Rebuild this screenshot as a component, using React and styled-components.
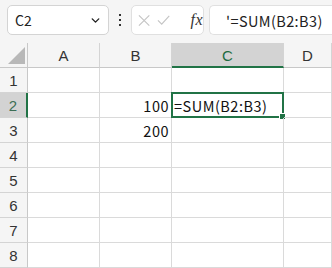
import React from "react";
import styled, { createGlobalStyle } from "styled-components";
import { ChevronDown } from "lucide-react";

const GlobalStyle = createGlobalStyle`
  html, body {
    margin: 0;
    padding: 0;
    background: #ffffff;
    overflow: hidden;
  }
  * { box-sizing: border-box; }
`;

const SHEET_FONT = `"Noto Sans CJK JP", "Noto Sans", "Liberation Sans", sans-serif`;

const Page = styled.div`
  width: 332px;
  height: 268px;
  display: flex;
  flex-direction: column;
  background: #f5f5f5;
  font-family: ${SHEET_FONT};
`;

const Toolbar = styled.div`
  height: 43px;
  display: flex;
  align-items: flex-start;
  padding: 5px 0 0 7px;
`;

const NameBox = styled.div`
  width: 102px;
  height: 30px;
  background: #fff;
  border: 1px solid #d4d4d4;
  border-radius: 5px;
  display: flex;
  align-items: center;
  justify-content: space-between;
  padding: 0 6px 0 7px;
  font-size: 14px;
  color: #222;
`;

const Dots = styled.div`
  width: 22px;
  height: 30px;
  display: flex;
  flex-direction: column;
  align-items: center;
  justify-content: center;
  gap: 3px;
  span {
    width: 2px;
    height: 2px;
    background: #333;
  }
`;

const ActionBox = styled.div`
  width: 73px;
  height: 30px;
  background: #fff;
  border: 1px solid #e0e0e0;
  border-radius: 5px;
  display: flex;
  align-items: center;
  padding: 0 0 0 6px;
  gap: 7px;
`;

const Fx = styled.span`
  font-family: "Liberation Serif", serif;
  font-style: italic;
  font-size: 16px;
  color: #333;
  margin-left: 13px;
  letter-spacing: 0.5px;
`;

const FormulaInput = styled.div`
  flex: 1;
  height: 30px;
  margin-left: 5px;
  background: #fff;
  border: 1px solid #e0e0e0;
  border-right: none;
  border-radius: 5px 0 0 5px;
  display: flex;
  align-items: center;
  padding-left: 16px;
  font-size: 14.5px;
  letter-spacing: 0.4px;
  color: #222;
`;

const Sheet = styled.div`
  flex: 1;
  display: grid;
  grid-template-columns: 28px 72px 72px 112px 1fr;
  grid-template-rows: 25px repeat(8, 25px);
  background: #fff;
`;

const Corner = styled.div`
  background: #f5f5f5;
  border-right: 1px solid #c8c8c8;
  border-bottom: 1px solid #c8c8c8;
  display: flex;
  align-items: flex-end;
  justify-content: flex-end;
  padding: 0 2px 3px 0;
`;

const ColHead = styled.div`
  background: ${(p) => (p.$active ? "#d3d3d3" : "#f5f5f5")};
  border-right: 1px solid #d4d4d4;
  border-bottom: ${(p) => (p.$active ? "2px solid #217346" : "1px solid #c8c8c8")};
  color: ${(p) => (p.$active ? "#1d6b40" : "#333")};
  font-family: "Liberation Sans", sans-serif;
  font-size: 15px;
  display: flex;
  align-items: center;
  justify-content: center;
  padding-top: ${(p) => (p.$active ? "1px" : "0")};
`;

const RowHead = styled.div`
  background: ${(p) => (p.$active ? "#d3d3d3" : "#f5f5f5")};
  border-right: ${(p) => (p.$active ? "2px solid #217346" : "1px solid #c8c8c8")};
  border-bottom: 1px solid #d4d4d4;
  color: ${(p) => (p.$active ? "#3d6e55" : "#333")};
  font-family: "Liberation Sans", sans-serif;
  font-size: 15px;
  display: flex;
  align-items: center;
  justify-content: center;
`;

const Cell = styled.div`
  position: relative;
  border-right: 1px solid #dadada;
  border-bottom: 1px solid #dadada;
  font-size: 14.5px;
  letter-spacing: 0.5px;
  color: #111;
  display: flex;
  align-items: center;
  justify-content: ${(p) => (p.$num ? "flex-end" : "flex-start")};
  padding: 0 2px;
  white-space: nowrap;
`;

const Selection = styled.div`
  position: absolute;
  left: -1px;
  top: -1px;
  right: -1px;
  bottom: -1px;
  border: 2px solid #217346;
  pointer-events: none;
  &::after {
    content: "";
    position: absolute;
    right: -4px;
    bottom: -4px;
    width: 5px;
    height: 5px;
    background: #217346;
    border: 1px solid #fff;
  }
`;

const cols = ["A", "B", "C", "D"];
const data = {
  B2: { v: "100", num: true },
  B3: { v: "200", num: true },
  C2: { v: "=SUM(B2:B3)" },
};

export default function App() {
  return (
    <>
      <GlobalStyle />
      <Page>
        <Toolbar>
          <NameBox>
            <span>C2</span>
            <ChevronDown size={13} strokeWidth={2.6} color="#222" />
          </NameBox>
          <Dots>
            <span />
            <span />
            <span />
          </Dots>
          <ActionBox>
            <svg width="13" height="13" viewBox="0 0 13 13">
              <path d="M1 1 L12 12 M12 1 L1 12" stroke="#c4c4c4" strokeWidth="1.2" fill="none" />
            </svg>
            <svg width="14" height="12" viewBox="0 0 14 12">
              <path d="M1 6.5 L5 10.5 L13 1.5" stroke="#c4c4c4" strokeWidth="1.2" fill="none" />
            </svg>
            <Fx>fx</Fx>
          </ActionBox>
          <FormulaInput>'=SUM(B2:B3)</FormulaInput>
        </Toolbar>
        <Sheet>
          <Corner>
            <svg width="17" height="17" viewBox="0 0 17 17">
              <polygon points="17,0 17,17 0,17" fill="#b8b8b8" />
            </svg>
          </Corner>
          {cols.map((c) => (
            <ColHead key={c} $active={c === "C"}>
              {c}
            </ColHead>
          ))}
          {[1, 2, 3, 4, 5, 6, 7, 8].map((r) => (
            <React.Fragment key={r}>
              <RowHead $active={r === 2}>{r}</RowHead>
              {cols.map((c) => {
                const d = data[c + r];
                return (
                  <Cell key={c} $num={d && d.num}>
                    {d ? d.v : null}
                    {c + r === "C2" && <Selection />}
                  </Cell>
                );
              })}
            </React.Fragment>
          ))}
        </Sheet>
      </Page>
    </>
  );
}
